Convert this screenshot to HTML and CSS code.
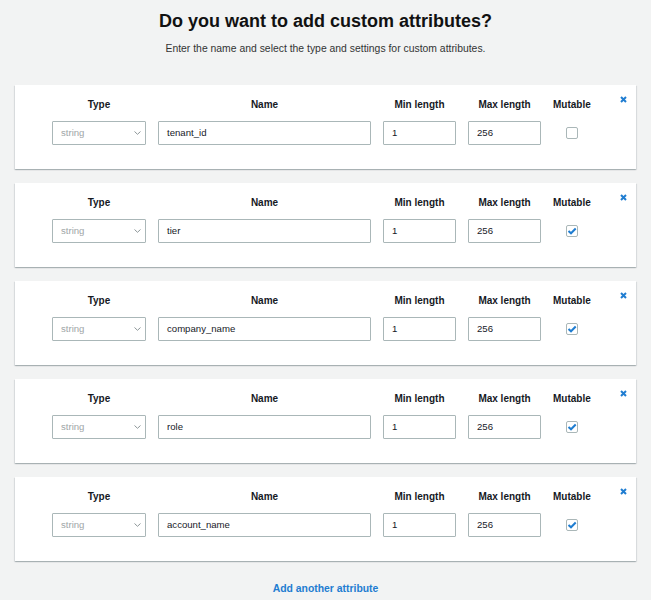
FILE: index.html
```html
<!DOCTYPE html>
<html>
<head>
<meta charset="utf-8">
<link rel="stylesheet" href="styles.css">
</head>
<body>
<main class="page">
  <h1 class="title">Do you want to add custom attributes?</h1>
  <p class="subtitle">Enter the name and select the type and settings for custom attributes.</p>

  <div class="list">
    <section class="card">
      <div class="grid">
        <span class="label">Type</span><span class="label">Name</span><span class="label">Min length</span><span class="label">Max length</span><span class="label">Mutable</span>
        <div class="select"><span>string</span><svg class="chev" width="7" height="4" viewBox="0 0 7 4"><path d="M0.5 0.5 L3.5 3.3 L6.5 0.5" fill="none" stroke="#8d9699" stroke-width="1"/></svg></div>
        <div class="input">tenant_id</div>
        <div class="input">1</div>
        <div class="input">256</div>
        <div class="check-cell"><span class="box"></span></div>
      </div>
      <button class="close"><svg width="7" height="7" viewBox="0 0 7 7"><path d="M1 1 L6 6 M6 1 L1 6" stroke="#1f7dd1" stroke-width="2"/></svg></button>
    </section>

    <section class="card">
      <div class="grid">
        <span class="label">Type</span><span class="label">Name</span><span class="label">Min length</span><span class="label">Max length</span><span class="label">Mutable</span>
        <div class="select"><span>string</span><svg class="chev" width="7" height="4" viewBox="0 0 7 4"><path d="M0.5 0.5 L3.5 3.3 L6.5 0.5" fill="none" stroke="#8d9699" stroke-width="1"/></svg></div>
        <div class="input">tier</div>
        <div class="input">1</div>
        <div class="input">256</div>
        <div class="check-cell"><span class="box"><svg width="10" height="8" viewBox="0 0 10 8"><path d="M1.5 4 L4 6.3 L8.7 1.5" fill="none" stroke="#1f7dd1" stroke-width="2"/></svg></span></div>
      </div>
      <button class="close"><svg width="7" height="7" viewBox="0 0 7 7"><path d="M1 1 L6 6 M6 1 L1 6" stroke="#1f7dd1" stroke-width="2"/></svg></button>
    </section>

    <section class="card">
      <div class="grid">
        <span class="label">Type</span><span class="label">Name</span><span class="label">Min length</span><span class="label">Max length</span><span class="label">Mutable</span>
        <div class="select"><span>string</span><svg class="chev" width="7" height="4" viewBox="0 0 7 4"><path d="M0.5 0.5 L3.5 3.3 L6.5 0.5" fill="none" stroke="#8d9699" stroke-width="1"/></svg></div>
        <div class="input">company_name</div>
        <div class="input">1</div>
        <div class="input">256</div>
        <div class="check-cell"><span class="box"><svg width="10" height="8" viewBox="0 0 10 8"><path d="M1.5 4 L4 6.3 L8.7 1.5" fill="none" stroke="#1f7dd1" stroke-width="2"/></svg></span></div>
      </div>
      <button class="close"><svg width="7" height="7" viewBox="0 0 7 7"><path d="M1 1 L6 6 M6 1 L1 6" stroke="#1f7dd1" stroke-width="2"/></svg></button>
    </section>

    <section class="card">
      <div class="grid">
        <span class="label">Type</span><span class="label">Name</span><span class="label">Min length</span><span class="label">Max length</span><span class="label">Mutable</span>
        <div class="select"><span>string</span><svg class="chev" width="7" height="4" viewBox="0 0 7 4"><path d="M0.5 0.5 L3.5 3.3 L6.5 0.5" fill="none" stroke="#8d9699" stroke-width="1"/></svg></div>
        <div class="input">role</div>
        <div class="input">1</div>
        <div class="input">256</div>
        <div class="check-cell"><span class="box"><svg width="10" height="8" viewBox="0 0 10 8"><path d="M1.5 4 L4 6.3 L8.7 1.5" fill="none" stroke="#1f7dd1" stroke-width="2"/></svg></span></div>
      </div>
      <button class="close"><svg width="7" height="7" viewBox="0 0 7 7"><path d="M1 1 L6 6 M6 1 L1 6" stroke="#1f7dd1" stroke-width="2"/></svg></button>
    </section>

    <section class="card">
      <div class="grid">
        <span class="label">Type</span><span class="label">Name</span><span class="label">Min length</span><span class="label">Max length</span><span class="label">Mutable</span>
        <div class="select"><span>string</span><svg class="chev" width="7" height="4" viewBox="0 0 7 4"><path d="M0.5 0.5 L3.5 3.3 L6.5 0.5" fill="none" stroke="#8d9699" stroke-width="1"/></svg></div>
        <div class="input">account_name</div>
        <div class="input">1</div>
        <div class="input">256</div>
        <div class="check-cell"><span class="box"><svg width="10" height="8" viewBox="0 0 10 8"><path d="M1.5 4 L4 6.3 L8.7 1.5" fill="none" stroke="#1f7dd1" stroke-width="2"/></svg></span></div>
      </div>
      <button class="close"><svg width="7" height="7" viewBox="0 0 7 7"><path d="M1 1 L6 6 M6 1 L1 6" stroke="#1f7dd1" stroke-width="2"/></svg></button>
    </section>
  </div>

  <a class="add-link" href="#">Add another attribute</a>
</main>
</body>
</html>
```

FILE: styles.css
```css
html, body {
  margin: 0;
  padding: 0;
  background: #f2f3f3;
  font-family: "Liberation Sans", Arial, sans-serif;
  color: #16191f;
}

.page {
  display: flex;
  flex-direction: column;
  align-items: center;
  padding: 9px 15px 0;
}

.title {
  margin: 0;
  font-size: 18px;
  line-height: 24px;
  font-weight: bold;
  color: #111;
}

.subtitle {
  margin: 9px 0 0;
  font-size: 10.4px;
  line-height: 14px;
  color: #333;
}

.list {
  align-self: stretch;
  display: flex;
  flex-direction: column;
  gap: 14px;
  margin-top: 29px;
}

.card {
  position: relative;
  background: #fff;
  height: 84px;
  box-sizing: border-box;
  padding: 13px 0 0 37px;
  box-shadow: 0 1px 1px 0 rgba(0, 28, 36, 0.18), 1px 1px 1px 0 rgba(0, 28, 36, 0.08), -1px 1px 1px 0 rgba(0, 28, 36, 0.08);
}

.grid {
  display: grid;
  grid-template-columns: 94px 213px 73px 73px auto;
  grid-template-rows: 14px 24px;
  column-gap: 12px;
  row-gap: 9px;
  justify-content: start;
}

.label {
  font-size: 10px;
  line-height: 14px;
  font-weight: bold;
  text-align: center;
  color: #16191f;
}

.select, .input {
  box-sizing: border-box;
  height: 24px;
  border: 1px solid #aab7b8;
  border-radius: 1px;
  font-size: 9.6px;
  line-height: 22px;
  padding: 0 8px;
  background: #fff;
}

.input {
  color: #16191f;
}

.select {
  display: flex;
  align-items: center;
  justify-content: space-between;
  color: #a0a6a8;
  padding-right: 4px;
}

.check-cell {
  display: flex;
  align-items: center;
  justify-content: center;
}

.box {
  box-sizing: border-box;
  width: 12px;
  height: 12px;
  border: 1px solid #aab7b8;
  border-radius: 2px;
  background: #fff;
  display: flex;
  align-items: center;
  justify-content: center;
}

.box svg {
  display: block;
}

.close {
  position: absolute;
  top: 11px;
  right: 9px;
  padding: 0;
  border: 0;
  background: none;
  width: 7px;
  height: 7px;
  display: block;
}

.close svg {
  display: block;
}

.add-link {
  margin-top: 21px;
  font-size: 10.4px;
  line-height: 14px;
  font-weight: bold;
  color: #1f7dd1;
  text-decoration: none;
}
```
